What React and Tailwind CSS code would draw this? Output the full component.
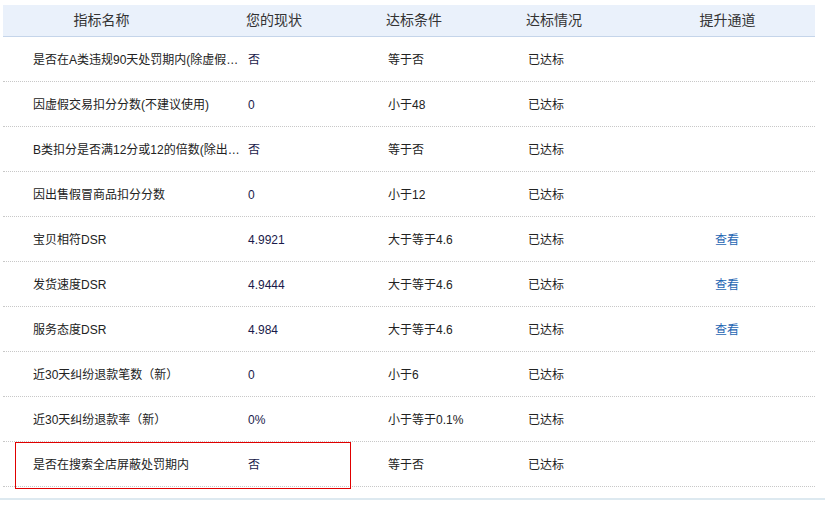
export default function App() {
  const rows = [
    ["是否在A类违规90天处罚期内(除虚假…", "否", "等于否", "已达标", ""],
    ["因虚假交易扣分分数(不建议使用)", "0", "小于48", "已达标", ""],
    ["B类扣分是否满12分或12的倍数(除出…", "否", "等于否", "已达标", ""],
    ["因出售假冒商品扣分分数", "0", "小于12", "已达标", ""],
    ["宝贝相符DSR", "4.9921", "大于等于4.6", "已达标", "查看"],
    ["发货速度DSR", "4.9444", "大于等于4.6", "已达标", "查看"],
    ["服务态度DSR", "4.984", "大于等于4.6", "已达标", "查看"],
    ["近30天纠纷退款笔数（新）", "0", "小于6", "已达标", ""],
    ["近30天纠纷退款率（新）", "0%", "小于等于0.1%", "已达标", ""],
    ["是否在搜索全店屏蔽处罚期内", "否", "等于否", "已达标", ""],
  ];
  return (
    <div className="w-[825px] h-[505px] bg-white relative overflow-hidden text-[12px] text-[#222]" style={{ fontFamily: '"Liberation Sans", "Noto Sans CJK SC", sans-serif' }}>
      <div className="pt-[5px] pl-[3px] w-[815px]">
        <div className="flex h-[32px] items-center bg-[#eaf1fb] border-b border-[#c5d5ea] text-[14px] text-[#333]">
          <div className="w-[237px] pr-[40px] text-center">指标名称</div>
          <div className="w-[140px] pl-[6px]">您的现状</div>
          <div className="w-[140px] pl-[6px]">达标条件</div>
          <div className="w-[140px] pl-[6px]">达标情况</div>
          <div className="flex-1 pr-[20px] text-center">提升通道</div>
        </div>
        {rows.map((r, i) => (
          <div key={i} className="flex h-[45px] items-center pt-[2px] border-b border-dotted border-[#c8c8c8]">
            <div className="w-[237px] pl-[30px] whitespace-nowrap overflow-hidden">{r[0]}</div>
            <div className="w-[140px] pl-[8px] text-[#1a1a4a]">{r[1]}</div>
            <div className="w-[140px] pl-[8px]">{r[2]}</div>
            <div className="w-[140px] pl-[8px]">{r[3]}</div>
            <div className="flex-1 pl-[55px] text-[#1f66b3]">{r[4]}</div>
          </div>
        ))}
      </div>
      <div className="mt-[11px] border-t-2 border-[#dde9f0]" />
      <div className="absolute left-[15px] top-[442px] w-[336px] h-[47px] border border-[#e00000]" />
    </div>
  );
}
